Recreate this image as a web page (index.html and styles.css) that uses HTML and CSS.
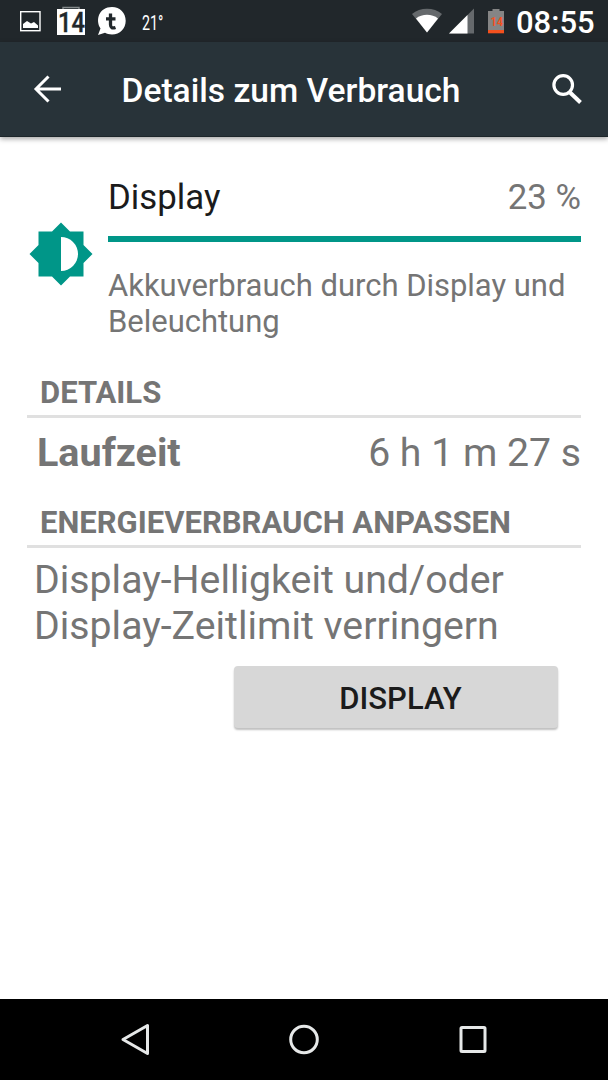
FILE: index.html
```html
<!DOCTYPE html>
<html lang="de">
<head>
  <meta charset="UTF-8">
  <title>Details zum Verbrauch</title>
  <link rel="stylesheet" href="styles.css">
</head>
<body>
  <div class="statusbar">
    <svg class="status-icons" width="130" height="42" viewBox="0 0 130 42">
      <rect x="20.700" y="11.700" width="19.300" height="19" fill="none" stroke="#fff" stroke-width="1.400"/>
      <path d="M23 28v-4l4-3 4 2.500 3-1.500 4 3.500V28z" fill="#fff"/>
      <path d="M63 9V7.500h16V9" fill="none" stroke="#858a8c" stroke-width="1.400"/>
      <path d="M57 9h28v26H57z" fill="#fff"/>
      <text class="day" x="58" y="31.500" textLength="27" lengthAdjust="spacingAndGlyphs">14</text>
      <path d="M112 7c8 0 13.700 6 13.700 13.700S120 34.500 112 34.500c-3 0-5-.5-7-1.700L98 35l2.500-6.500C95 20 99 7 112 7z" fill="#fff"/>
      <path d="M110.500 13.500v11c0 3.500 2 4 5 3M106 18.800h9.500" fill="none" stroke="#21272b" stroke-width="3.300"/>
    </svg>
    <span class="temp">21°</span>
    <svg class="signal" width="86" height="42" viewBox="0 0 86 42">
      <path d="M12 14C20 7 34 7 42 14L27 32.500z" fill="#65696c"/>
      <path d="M16 18.500C22 13.500 32 13.500 38 18.500L27 32.500z" fill="#fff"/>
      <path d="M49 33.500L74 8.500v25z" fill="#65696c"/>
      <path d="M49 33.500L67.500 15v18.500z" fill="#fff"/>
    </svg>
    <svg class="battery" width="18" height="42" viewBox="0 0 18 42">
      <path d="M2 11h4.500V9h7v2H18v22H2z" fill="#858585"/>
      <path d="M2 30h16v3.300H2z" fill="#f4511e"/>
      <text class="level" x="4.500" y="25.500" textLength="12.500" lengthAdjust="spacingAndGlyphs">14</text>
    </svg>
    <span class="clock">08:55</span>
  </div>

  <header class="toolbar">
    <svg class="back" width="28" height="28" viewBox="0 0 28 28">
      <path d="M28 14H3M15.500 1.500L3 14l12.500 12.500" fill="none" stroke="#fff" stroke-width="3"/>
    </svg>
    <h1>Details zum Verbrauch</h1>
    <svg class="search" width="32" height="32" viewBox="0 0 32 32">
      <circle cx="12.200" cy="12" r="9.300" fill="none" stroke="#fff" stroke-width="3.200"/>
      <path d="M19 19.500L29.500 29.500" stroke="#fff" stroke-width="4"/>
    </svg>
  </header>

  <main>
    <section class="usage">
      <svg class="brightness" width="64" height="64" viewBox="0 0 64 64">
        <path d="M32 .5L41 9.500H54.500V23L63.500 32l-9 9V54.500H41l-9 9-9-9H9.500V41l-9-9 9-9V9.500H23z" fill="#009688"/>
        <path d="M32 15a17 17 0 0 1 0 34z" fill="#fff"/>
      </svg>
      <div class="usage-info">
        <div class="usage-row">
          <span class="name">Display</span>
          <span class="percent">23 %</span>
        </div>
        <div class="bar"></div>
        <p class="description">Akkuverbrauch durch Display und<br>Beleuchtung</p>
      </div>
    </section>

    <h2>DETAILS</h2>
    <div class="detail-row">
      <b>Laufzeit</b>
      <span>6 h 1 m 27 s</span>
    </div>

    <h2>ENERGIEVERBRAUCH ANPASSEN</h2>
    <p class="advice">Display-Helligkeit und/oder<br>Display-Zeitlimit verringern</p>
    <button class="action">DISPLAY</button>
  </main>

  <nav class="navbar">
    <svg width="34" height="34" viewBox="0 0 34 34">
      <path d="M29.500 3.500v28L5 17.500z"/>
    </svg>
    <svg width="34" height="34" viewBox="0 0 34 34">
      <circle cx="17" cy="17.500" r="13.300"/>
    </svg>
    <svg width="34" height="34" viewBox="0 0 34 34">
      <rect x="5" y="5.500" width="24" height="24" rx="1"/>
    </svg>
  </nav>
</body>
</html>
```
FILE: styles.css
```css
* { box-sizing: border-box; }
body { margin: 0; height: 1080px; display: flex; flex-direction: column; background: #fff; color: #757575; font-family: Roboto, sans-serif; overflow: hidden; }
h1, h2, p { margin: 0; }
svg { display: block; flex: none; }

.statusbar { height: 42px; flex: none; display: flex; align-items: center; background: #21272b; color: #fff; }
.day { font: 500 27px Roboto, sans-serif; fill: #21272b; stroke: #21272b; stroke-width: 0.4px; }
.temp { width: 20px; margin-left: 12px; padding-top: 3px; font-size: 21px; transform: scaleX(0.68); transform-origin: left; }
.signal { margin-left: auto; }
.level { font: bold 13px Roboto, sans-serif; fill: #f4511e; }
.clock { width: 92px; padding-top: 3px; margin-left: 12px; font-size: 31px; font-weight: 500; white-space: nowrap; }

.toolbar { height: 95px; flex: none; display: flex; align-items: center; padding: 0 25px 0 33px; background: #283339; border-bottom: 1px solid #1d262a; box-shadow: 0 2px 5px rgba(0, 0, 0, 0.35); }
.toolbar h1 { margin-left: 60.500px; padding-top: 3px; color: #fff; font-size: 33.600px; font-weight: 500; white-space: nowrap; }
.search { margin-left: auto; }

main { flex: 1; padding: 40px 27px 0; }
.usage { display: flex; gap: 16px; }
.brightness { margin: 45px 0 0 2px; }
.usage-info { flex: 1; margin-left: -1px; }
.usage-row { display: flex; justify-content: space-between; font-size: 34.800px; line-height: 40px; }
.name { color: #1b1b1b; }
.bar { height: 6px; margin-top: 19px; background: #009688; }
.description { margin-top: 26px; font-size: 31px; line-height: 36px; letter-spacing: -0.020px; white-space: nowrap; }

h2 { margin-top: 35px; padding: 0 0 4px 13px; border-bottom: 3px solid #e0e0e0; font-size: 31px; line-height: 36px; font-weight: bold; white-space: nowrap; }
.detail-row { display: flex; justify-content: space-between; margin-top: 12px; padding-left: 10px; font-size: 39.200px; line-height: 46px; }
.detail-row b { font-size: 39.500px; }
.detail-row + h2 { margin-top: 29px; }
.advice { margin-top: 9px; padding-left: 7px; font-size: 39.250px; line-height: 46px; white-space: nowrap; }
.action { display: block; width: 324px; height: 62px; margin: 17px 23px 0 auto; padding: 2px 0 0 9px; border: 0; border-radius: 4px; background: #d7d7d7; box-shadow: 0 2px 2px rgba(0, 0, 0, 0.25); color: #1b1b1b; font: 500 31px Roboto, sans-serif; }

.navbar { height: 81px; flex: none; display: flex; justify-content: center; align-items: center; gap: 135px; padding-bottom: 2px; background: #000; }
.navbar svg { fill: none; stroke: #e6e8e8; stroke-width: 3; stroke-linejoin: round; }
```
